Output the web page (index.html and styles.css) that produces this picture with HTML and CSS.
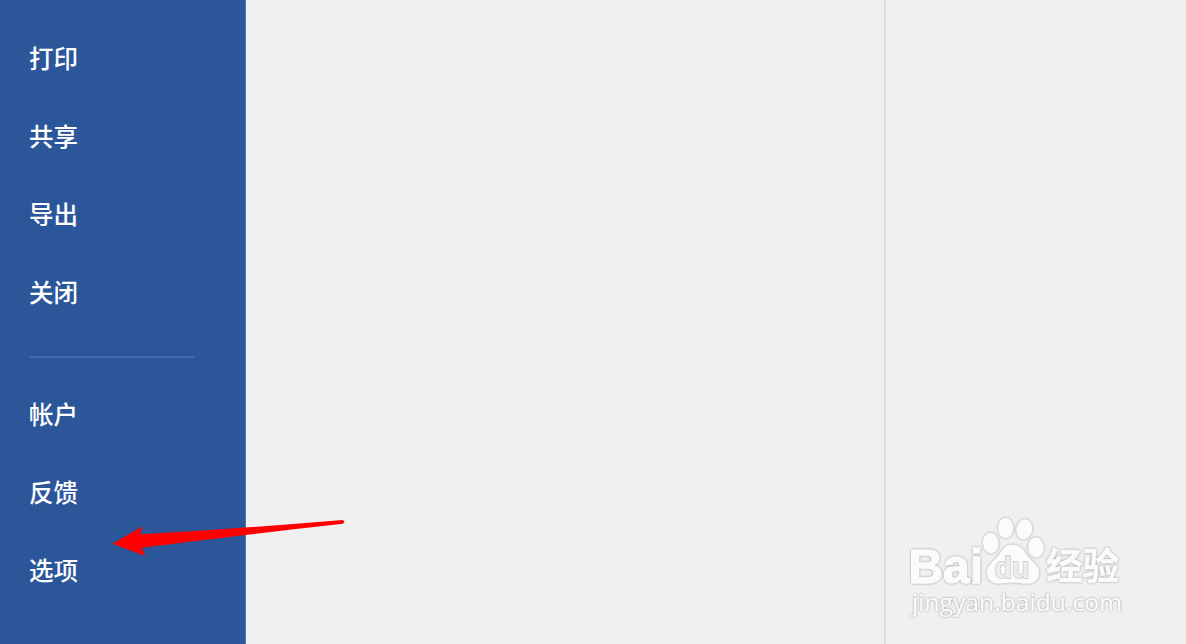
FILE: index.html
```html
<!DOCTYPE html>
<html lang="zh-CN">
<head>
<meta charset="utf-8">
<title>选项</title>
<link rel="stylesheet" href="styles.css">
</head>
<body>
<div class="app">
  <nav class="sidebar">
    <a class="item">打印</a>
    <a class="item">共享</a>
    <a class="item">导出</a>
    <a class="item">关闭</a>
    <div class="divider"></div>
    <a class="item">帐户</a>
    <a class="item">反馈</a>
    <a class="item">选项</a>
  </nav>
  <main class="content"></main>
  <aside class="panel"></aside>
  <svg class="arrow" viewBox="0 0 240 50" width="240" height="50">
    <path d="M1.300 28.800 31.300 11.500 29.500 19.300Q130 13.500 231.500 5Q235 6 232 8.800Q130 20 30.800 32.800L34.300 41Z"/>
  </svg>
  <svg class="watermark" viewBox="0 0 240 120" width="240" height="120">
    <g class="mark">
      <text class="bai" x="8.500" y="77.500" textLength="74.500" lengthAdjust="spacingAndGlyphs">Bai</text>
      <ellipse cx="90.7" cy="38" rx="7.800" ry="10.2" transform="rotate(-8 90.7 38)"/>
      <ellipse cx="105.7" cy="23" rx="7.5" ry="10.2"/>
      <ellipse cx="124.3" cy="24.3" rx="7.800" ry="10" transform="rotate(10 124.3 24.3)"/>
      <ellipse cx="136" cy="42.5" rx="7.800" ry="10" transform="rotate(-5 136 42.5)"/>
      <path d="M112.7 39.8C104.5 39.8 102 45.5 98 51C94 56 87 60.500 87 67.500C87 74.500 92 78.500 99 78.400C104.500 78.300 107 77.500 113 77.500C119 77.500 122 78.600 128 78.600C135 78.400 139.300 74 139 67.500C138.500 60.500 132 56.500 127.500 51C123.500 45.500 121 39.800 112.700 39.800Z"/>
      <text class="jingyan" x="146" y="74.500" textLength="73" lengthAdjust="spacingAndGlyphs">经验</text>
      <text class="url" x="12" y="106" textLength="210" lengthAdjust="spacingAndGlyphs">jingyan.baidu.com</text>
    </g>
    <text class="du" x="94.500" y="72.500" textLength="35" lengthAdjust="spacingAndGlyphs">du</text>
  </svg>
</div>
</body>
</html>
```
FILE: styles.css
```css
body {
  margin: 0;
  background: #f0f0f0;
  font-family: "Noto Sans CJK SC", sans-serif;
}

.app {
  position: relative;
  display: flex;
  height: 644px;
  overflow: hidden;
}

.sidebar {
  box-sizing: border-box;
  width: 246px;
  padding: 19px 51px 0 29px;
  background: #2b579a;
  border-right: 1px solid #5075ac;
  flex: none;
}

.item {
  display: block;
  height: 78px;
  line-height: 78px;
  font-size: 24.5px;
  font-weight: 500;
  color: #fff;
}

.divider {
  height: 2px;
  margin: 25px 0 17px 1px;
  background: #3e6db5;
}

.content {
  width: 638px;
  flex: none;
}

.panel {
  flex: 1;
  border-left: 2px solid #dedede;
}

.arrow {
  position: absolute;
  left: 111px;
  top: 515px;
  fill: #f00;
}

.watermark {
  position: absolute;
  left: 900px;
  top: 505px;
}

.mark {
  fill: #fbfbfb;
  stroke: #fbfbfb;
  stroke-width: 0.5px;
  filter: drop-shadow(0 0 1px #999);
}

.bai {
  font: bold 49px/1 "Liberation Sans", sans-serif;
  stroke-width: 1.4px;
}

.du {
  font: bold 29px/1 "Liberation Sans", sans-serif;
  fill: #ededed;
  stroke: #c8c8c8;
  stroke-width: 1.4px;
  paint-order: stroke;
}

.jingyan {
  font: bold 37px/1 "Noto Sans CJK SC", sans-serif;
}

.url {
  font: 24px/1 "Open Sans", sans-serif;
  stroke-width: 0.2px;
}
```
